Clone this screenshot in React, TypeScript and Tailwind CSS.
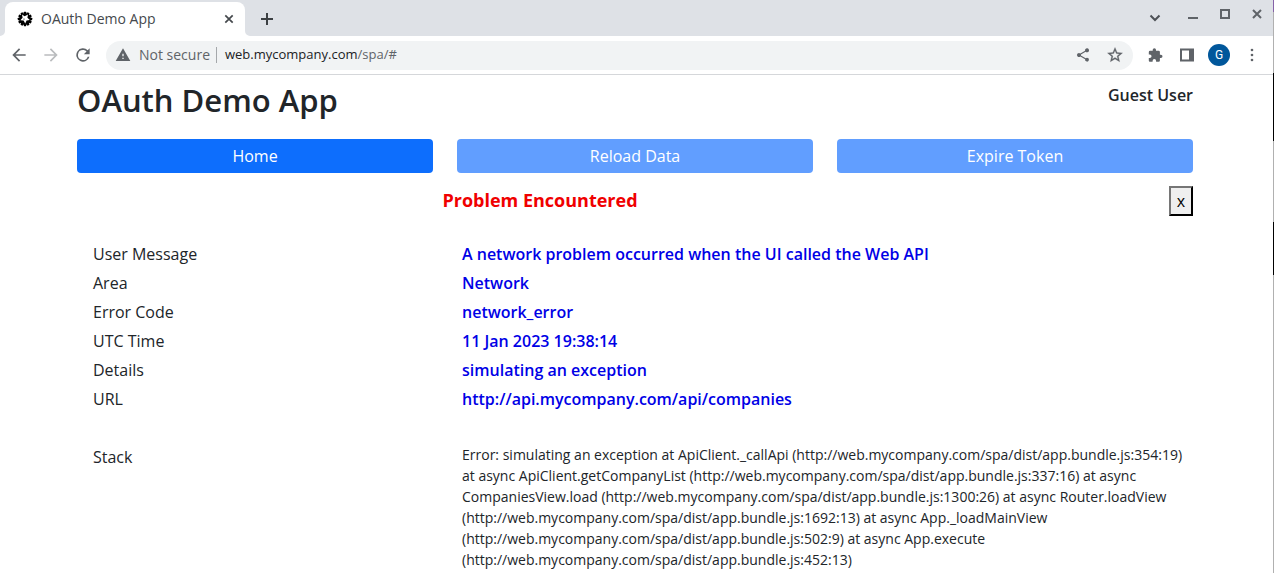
import type { ReactNode } from "react";

type IconProps = { className?: string; children: ReactNode };

function Icon({ className = "size-5", children }: IconProps) {
  return (
    <svg viewBox="0 0 24 24" className={`shrink-0 ${className}`} fill="currentColor" aria-hidden="true">
      {children}
    </svg>
  );
}

function Favicon() {
  const spikes = Array.from({ length: 12 }, (_, i) => i * 30);
  return (
    <svg viewBox="0 0 16 16" className="size-4 shrink-0" aria-hidden="true">
      {spikes.map((angle) => (
        <rect key={angle} x="6.8" y="0.8" width="2.4" height="3" rx="0.4" transform={`rotate(${angle} 8 8)`} />
      ))}
      <circle cx="8" cy="8" r="5.9" />
      <path fill="#fff" d="M5 3.6l2.6 1.6 3.4-1.6-.6 3.2 2.4 2.2-3.2.4-1.4 3.2-1.6-3-3.2-.4 2.2-2.4z" />
      <circle cx="7" cy="8" r=".6" />
    </svg>
  );
}

function TabStrip() {
  return (
    <div className="flex h-9 items-end bg-[#dee1e6] text-[#5f6368]">
      <svg viewBox="0 0 5 5" className="size-[5px]" fill="#fff" aria-hidden="true"><path d="M5 0v5H0a5 5 0 0 0 5-5" /></svg>
      <div className="flex h-[34px] w-60 items-center rounded-t-lg bg-white pr-2 pl-3">
        <Favicon />
        <span className="ml-2 flex-1 text-sm text-[#45494d]">OAuth Demo App</span>
        <button type="button" aria-label="Close tab" className="text-[#45494d]">
          <svg viewBox="0 0 16 16" className="size-4" fill="none" stroke="currentColor" strokeWidth="1.7"><path d="m4.3 4.3 7.4 7.4M11.7 4.3l-7.4 7.4" /></svg>
        </button>
      </div>
      <svg viewBox="0 0 5 5" className="size-[5px]" fill="#fff" aria-hidden="true"><path d="M0 0v5h5a5 5 0 0 1-5-5" /></svg>
      <button type="button" aria-label="New tab" className="mb-[7px] ml-[7px] text-[#3c4043]">
        <svg viewBox="0 0 20 20" className="size-5" fill="none" stroke="currentColor" strokeWidth="2"><path d="M10 4v12M4 10h12" /></svg>
      </button>
      <div className="mb-[10px] ml-auto flex items-center gap-4 pr-2">
        <button type="button" aria-label="Search tabs" className="mt-[6px] mr-[6px]">
          <svg viewBox="0 0 16 16" className="size-4" fill="none" stroke="#4d5156" strokeWidth="2"><path d="M3.5 5.5 8 10l4.5-4.5" /></svg>
        </button>
        <button type="button" aria-label="Minimize">
          <svg viewBox="0 0 16 16" className="size-4" fill="#5f6368"><path d="M3 10h10v2H3z" /></svg>
        </button>
        <button type="button" aria-label="Maximize">
          <svg viewBox="0 0 16 16" className="size-4" fill="none" stroke="#5f6368" strokeWidth="2"><path d="M4 3h8v8H4z" /></svg>
        </button>
        <button type="button" aria-label="Close window">
          <svg viewBox="0 0 16 16" className="size-4" fill="none" stroke="#5f6368" strokeWidth="2"><path d="m4 3 8 8M12 3l-8 8" /></svg>
        </button>
      </div>
    </div>
  );
}

function Toolbar() {
  return (
    <div className="flex h-[39px] items-center border-b border-[#d5d7da] bg-white pr-[11px] pl-[9px] text-[#5f6368]">
      <div className="flex items-center gap-3">
        <button type="button" aria-label="Back"><Icon><path d="M20 11H7.8l5.6-5.6L12 4l-8 8 8 8 1.4-1.4L7.8 13H20z" /></Icon></button>
        <button type="button" aria-label="Forward" className="text-[#babcbe]"><Icon><path d="m12 4-1.4 1.4 5.6 5.6H4v2h12.2l-5.6 5.6L12 20l8-8z" /></Icon></button>
        <button type="button" aria-label="Reload"><Icon><path d="M17.65 6.35A8 8 0 1 0 19.73 14h-2.08A6 6 0 1 1 12 6c1.66 0 3.14.69 4.22 1.78L13 11h7V4z" /></Icon></button>
      </div>
      <div className="ml-[13px] flex h-[29px] flex-1 items-center rounded-full bg-[#f1f3f4] pr-[9px] pl-[9px]">
        <Icon className="size-4"><path d="M1 21h22L12 2zm12-3h-2v-2h2zm0-4h-2v-4h2z" /></Icon>
        <span className="ml-2 text-sm">Not secure</span>
        <span className="mr-2 ml-[6px] h-4 w-px bg-[#a5a8ab]" />
        <span className="flex-1 text-[13px]"><span className="text-[#202124]">web.mycompany.com</span>/spa/#</span>
        <div className="flex items-center gap-[15px]">
          <button type="button" aria-label="Share"><Icon className="size-4"><path d="M18 16.08c-.76 0-1.44.3-1.96.77L8.91 12.7a3.3 3.3 0 0 0 0-1.4l7.05-4.11A3 3 0 1 0 15.09 5.7L8.04 9.81a3 3 0 1 0 0 4.38l7.12 4.16A2.92 2.92 0 1 0 18 16.08" /></Icon></button>
          <button type="button" aria-label="Bookmark"><Icon className="size-[18px]"><path stroke="currentColor" strokeWidth=".4" d="m22 9.24-7.19-.62L12 2 9.19 8.63 2 9.24l5.46 4.73L5.82 21 12 17.27 18.18 21l-1.63-7.03zM12 15.4l-3.76 2.27 1-4.28-3.32-2.88 4.38-.38L12 6.1l1.71 4.04 4.38.38-3.32 2.88 1 4.28z" /></Icon></button>
        </div>
      </div>
      <div className="ml-[13px] flex items-center">
        <button type="button" aria-label="Extensions"><Icon className="size-[18px]"><path transform="translate(2 2) scale(.87)" d="M20.5 11H19V7a2 2 0 0 0-2-2h-4V3.5a2.5 2.5 0 0 0-5 0V5H4a2 2 0 0 0-1.99 2v3.8H3.5a2.7 2.7 0 0 1 0 5.4H2V20c0 1.1.9 2 2 2h3.8v-1.5a2.7 2.7 0 0 1 5.4 0V22H17a2 2 0 0 0 2-2v-4h1.5a2.5 2.5 0 0 0 0-5" /></Icon></button>
        <button type="button" aria-label="Side panel" className="ml-[15px]"><svg viewBox="0 0 16 16" className="size-4"><path d="M2 2.5h12v11H2z" fill="none" stroke="#5f6368" strokeWidth="2" /><path d="M10 2h4v12h-4z" fill="#5f6368" /></svg></button>
        <button type="button" aria-label="Profile" className="ml-[13px] flex size-[22px] items-center justify-center rounded-full bg-[#01579b] font-[Roboto,sans-serif] text-xs text-white">G</button>
        <button type="button" aria-label="Menu" className="ml-3"><Icon className="size-5"><circle cx="12" cy="6" r="1.6" /><circle cx="12" cy="12" r="1.6" /><circle cx="12" cy="18" r="1.6" /></Icon></button>
      </div>
    </div>
  );
}

const details = [
  ["User Message", "A network problem occurred when the UI called the Web API"],
  ["Area", "Network"],
  ["Error Code", "network_error"],
  ["UTC Time", "11 Jan 2023 19:38:14"],
  ["Details", "simulating an exception"],
  ["URL", "http://api.mycompany.com/api/companies"],
];

const stack = [
  "Error: simulating an exception at ApiClient._callApi (http://web.mycompany.com/spa/dist/app.bundle.js:354:19)",
  "at async ApiClient.getCompanyList (http://web.mycompany.com/spa/dist/app.bundle.js:337:16) at async",
  "CompaniesView.load (http://web.mycompany.com/spa/dist/app.bundle.js:1300:26) at async Router.loadView",
  "(http://web.mycompany.com/spa/dist/app.bundle.js:1692:13) at async App._loadMainView",
  "(http://web.mycompany.com/spa/dist/app.bundle.js:502:9) at async App.execute",
  "(http://web.mycompany.com/spa/dist/app.bundle.js:452:13)",
];

function WindowEdge() {
  return (
    <div className="flex w-px flex-col bg-[#b0b0b0]" aria-hidden="true">
      <div className="h-3 bg-[#8562a8]" />
      <div className="mt-[61px] h-[68px] bg-black" />
      <div className="mt-[81px] h-[53px] bg-black" />
    </div>
  );
}

export default function App() {
  return (
    <div className="flex min-h-screen bg-white font-['Open_Sans',sans-serif] text-[#212529]">
      <div className="min-w-0 flex-1">
        <TabStrip />
        <Toolbar />
        <main className="mx-auto max-w-[1143px] pr-[15px] pl-3">
          <header className="flex justify-between pt-[5px]">
            <h1 className="text-[31px] leading-10 font-semibold">OAuth Demo App</h1>
            <p className="pt-[3px] text-base leading-6 font-semibold">Guest User</p>
          </header>
          <nav className="mt-[19px] grid grid-cols-3 gap-6 text-base text-white">
            <button type="button" className="h-[34px] rounded bg-[#0d6efd]">Home</button>
            <button type="button" disabled className="h-[34px] rounded bg-[#619eff]">Reload Data</button>
            <button type="button" disabled className="h-[34px] rounded bg-[#619eff]">Expire Token</button>
          </nav>
          <section>
            <div className="mt-[13px] grid grid-cols-[1fr_24px]">
              <h2 className="pr-[166px] text-center text-lg leading-7 font-bold text-[#f00000]">Problem Encountered</h2>
              <button type="button" aria-label="Close error" className="h-[30px] border-2 border-t-[#767676] border-r-black border-b-black border-l-[#767676] bg-[#efefef] text-base leading-6 text-black">x</button>
            </div>
            <dl className="mt-6 px-4 text-base leading-[29px]">
              {details.map(([label, value]) => (
                <div key={label} className="grid grid-cols-[369px_1fr]">
                  <dt>{label}</dt>
                  <dd className="font-semibold text-[#0000e6]">{value}</dd>
                </div>
              ))}
              <div className="mt-[29px] grid grid-cols-[369px_1fr]">
                <dt>Stack</dt>
                <dd className="pt-px text-sm leading-[21px] whitespace-nowrap">
                  {stack.map((line) => (
                    <span key={line} className="block">{line} </span>
                  ))}
                </dd>
              </div>
            </dl>
          </section>
        </main>
      </div>
      <WindowEdge />
    </div>
  );
}
